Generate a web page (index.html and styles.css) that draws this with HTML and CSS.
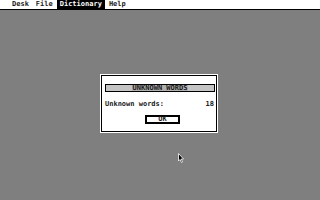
FILE: index.html
```html
<!DOCTYPE html>
<html>
<head>
<meta charset="utf-8">
<link rel="stylesheet" href="styles.css">
</head>
<body>
<div class="screen">
  <div class="menubar">
    <span class="menu">Desk</span>
    <span class="menu">File</span>
    <span class="menu active">Dictionary</span>
    <span class="menu">Help</span>
  </div>
  <div class="desktop">
    <div class="dialog">
      <div class="titlebar"><span class="title">UNKNOWN WORDS</span></div>
      <div class="row"><span>Unknown words:</span><span>18</span></div>
      <div class="buttons"><div class="btn">OK</div></div>
    </div>
    <svg class="pointer" width="6" height="10" viewBox="0 0 6 10">
      <path d="M0.5 0.5 L0.5 8 L2 6.5 L3.5 9.5 L4.5 9 L3.2 6 L5.5 6 Z" fill="#000" stroke="#fff" stroke-width="0.8"/>
    </svg>
  </div>
</div>
</body>
</html>
```
FILE: styles.css
```css
html, body {
  margin: 0;
  padding: 0;
}
body {
  width: 320px;
  height: 200px;
  overflow: hidden;
  font-family: "DejaVu Sans Mono", monospace;
  font-weight: bold;
  font-size: 7px;
  color: #1a1a1a;
}
.screen {
  width: 320px;
  height: 200px;
  display: flex;
  flex-direction: column;
  background: #7f7f7f;
}
.menubar {
  height: 9px;
  background: #fff;
  border-bottom: 1px solid #000;
  display: flex;
  align-items: center;
  padding-left: 9px;
  gap: 1px;
  line-height: 9px;
}
.menu {
  padding: 0 3px;
  height: 9px;
}
.menu.active {
  background: #000;
  color: #fff;
}
.desktop {
  position: relative;
  flex: 1;
  display: flex;
  justify-content: flex-start;
  align-items: flex-start;
  padding-top: 65px;
  padding-left: 101px;
}
.dialog {
  background: #fff;
  border: 1px solid #000;
  box-shadow: 0 0 0 1px #fff;
  width: 116px;
  height: 57px;
  box-sizing: border-box;
  display: flex;
  flex-direction: column;
  padding: 8px 1px 0 3px;
}
.titlebar {
  height: 8px;
  background: #c4c4c4;
  border: 1px solid #000;
  box-sizing: border-box;
  display: flex;
  justify-content: center;
  align-items: center;
  line-height: 6px;
}
.title {
  background: #b0b0b0;
  padding: 0 1px;
}
.row {
  display: flex;
  justify-content: space-between;
  margin-top: 8px;
  padding-right: 1px;
  line-height: 8px;
}
.buttons {
  display: flex;
  justify-content: center;
  margin-top: 7px;
}
.btn {
  width: 35px;
  height: 9px;
  border: 2px solid #000;
  box-sizing: border-box;
  text-align: center;
  line-height: 5px;
  margin-left: 5px;
}
.pointer {
  position: absolute;
  left: 178px;
  top: 143px;
}
```
